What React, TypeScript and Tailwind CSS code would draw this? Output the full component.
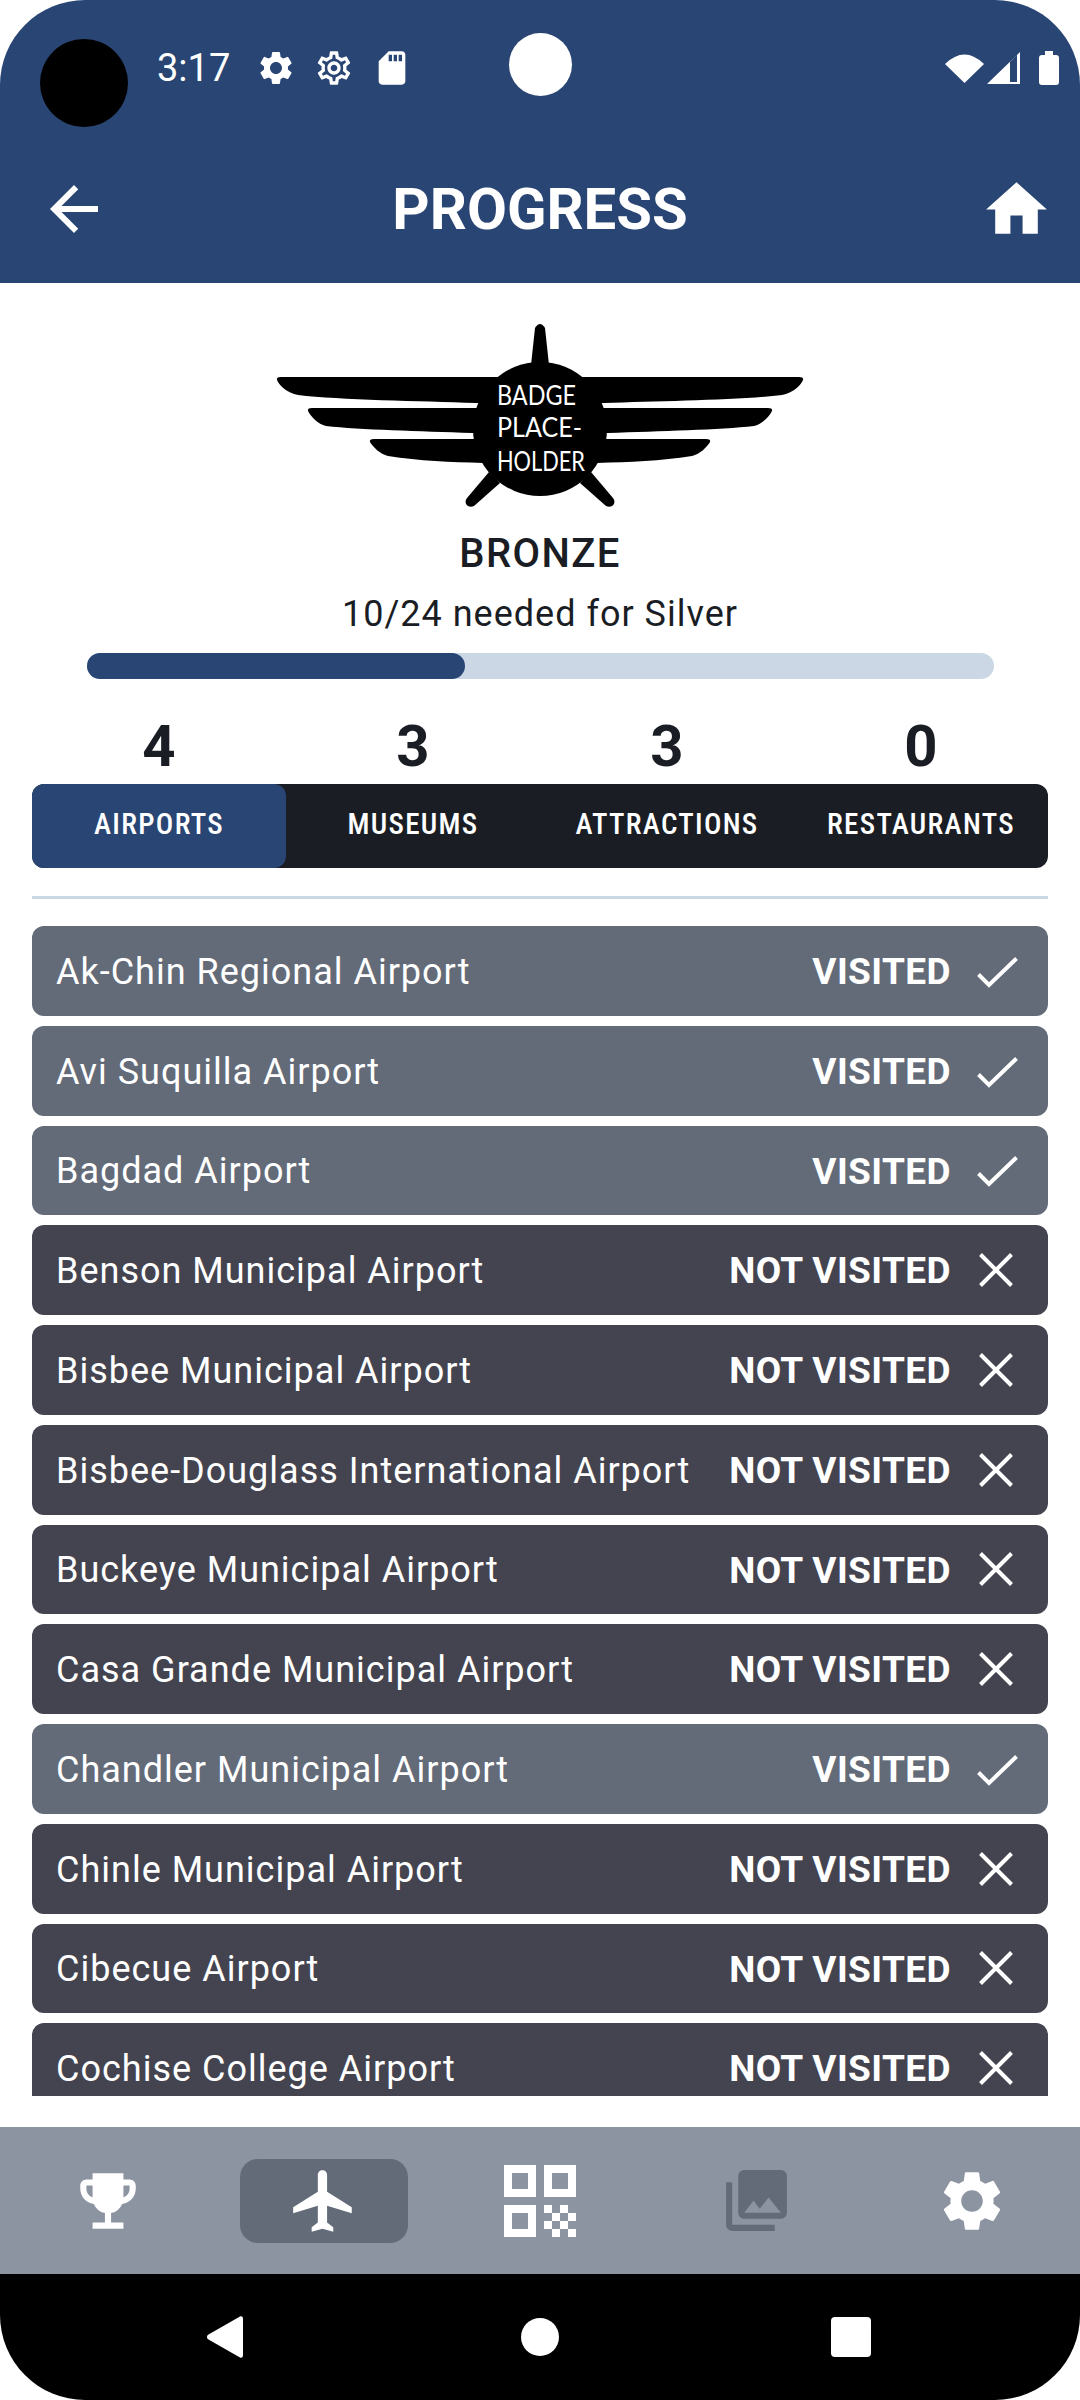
import { MdArrowBack, MdHome, MdSettings, MdOutlineSettings, MdPhotoLibrary, MdEmojiEvents, MdSdCard } from "react-icons/md";

const airports: [string, boolean][] = [
  ["Ak-Chin Regional Airport", true],
  ["Avi Suquilla Airport", true],
  ["Bagdad Airport", true],
  ["Benson Municipal Airport", false],
  ["Bisbee Municipal Airport", false],
  ["Bisbee-Douglass International Airport", false],
  ["Buckeye Municipal Airport", false],
  ["Casa Grande Municipal Airport", false],
  ["Chandler Municipal Airport", true],
  ["Chinle Municipal Airport", false],
  ["Cibecue Airport", false],
  ["Cochise College Airport", false],
];

const tabs = [
  { count: 4, label: "AIRPORTS" },
  { count: 3, label: "MUSEUMS" },
  { count: 3, label: "ATTRACTIONS" },
  { count: 0, label: "RESTAURANTS" },
];

function Badge() {
  const wings = (
    <>
      <path d="M281 377H500V403H476C420 401 340 400 298 395C287 393 279 385 277 380Q276 377 281 377Z" />
      <path d="M312 408H490V433H472C420 431 360 430 326 426C318 424 311 417 308 411Q307 408 312 408Z" />
      <path d="M374 439H500V463H483C450 462 420 461 388 456C380 454 373 447 370 442Q369 439 374 439Z" />
      <path d="M489 472L467 498C463 503 468 509 474 506L500 483Z" />
    </>
  );
  return (
    <svg width="540" height="192" viewBox="270 318 540 192" fill="#000">
      <path d="M531 365L535 328Q540 320 545 328L549 365Z" />
      <circle cx="540" cy="429" r="67" />
      {wings}
      <g transform="matrix(-1 0 0 1 1080 0)">{wings}</g>
      <g fill="#fff" fontFamily="Lato" fontSize="27" fontWeight="400">
        <text x="497" y="405" textLength="79" lengthAdjust="spacingAndGlyphs">BADGE</text>
        <text x="497" y="437" textLength="85" lengthAdjust="spacingAndGlyphs">PLACE-</text>
        <text x="497" y="471" textLength="88" lengthAdjust="spacingAndGlyphs">HOLDER</text>
      </g>
    </svg>
  );
}

function AirportRow({ name, visited }: { name: string; visited: boolean }) {
  return (
    <div className={`flex h-[89.75px] shrink-0 items-center justify-between rounded-xl pl-6 pr-[30px] text-white ${visited ? "bg-[#636b79]" : "bg-[#444450]"}`}>
      <span className="pt-[2px] text-[36px] tracking-[1px]">{name}</span>
      <div className="flex items-center gap-[25px]">
        <span className="pt-[2px] text-[37px] font-bold tracking-[0.4px]">{visited ? "VISITED" : "NOT VISITED"}</span>
        <svg width="42" height="42" viewBox="0 0 42 42" fill="none" stroke="#fff" strokeWidth="4">
          <path d={visited ? "M2.5 24.5L13 35L40.5 8.5" : "M4.5 5.5L35.5 36.5M35.5 5.5L4.5 36.5"} />
        </svg>
      </div>
    </div>
  );
}

function QrIcon() {
  const cells = [[0, 0], [16, 0], [8, 8], [24, 8], [0, 16], [16, 16], [8, 24], [24, 24]];
  return (
    <svg width="72" height="72" viewBox="0 0 72 72" fill="#fff">
      <path fillRule="evenodd" d="M0 0H32V32H0ZM8 8V24H24V8Z" />
      <path fillRule="evenodd" d="M40 0H72V32H40ZM48 8V24H64V8Z" />
      <path fillRule="evenodd" d="M0 40H32V72H0ZM8 48V64H24V48Z" />
      {cells.map(([x, y]) => (
        <rect key={`${x}-${y}`} x={40 + x} y={40 + y} width="8" height="8" />
      ))}
    </svg>
  );
}

export default function App() {
  return (
    <div className="relative flex h-[2400px] w-[1080px] flex-col overflow-hidden rounded-[85px] bg-white font-['Roboto',sans-serif] text-[#1a1d24]">
      {/* Status bar + header */}
      <header className="relative h-[283px] shrink-0 bg-[#294573] text-white">
        <div className="absolute left-[40px] top-[39px] h-[88px] w-[88px] rounded-full bg-black" />
        <div className="absolute left-[509px] top-[33px] h-[63px] w-[63px] rounded-full bg-white" />
        <div className="flex h-[136px] items-center justify-between pl-[157px] pr-[21px]">
          <div className="flex items-center gap-[26px]">
            <span className="text-[38px] leading-none">3:17</span>
            <div className="flex items-center gap-[18px]">
              <MdSettings size={40} />
              <MdOutlineSettings size={40} />
              <MdSdCard size={40} />
            </div>
          </div>
          <svg width="114" height="36" viewBox="0 0 114 36" fill="#fff">
            <path d="M0 14Q19.5 -5 39 14L19.5 33Z" />
            <path fillRule="evenodd" d="M42 34L75 2V34ZM65 12V32H72V5Z" />
            <path d="M100 1H108V5H111C113 5 114 6 114 8V32C114 34 113 35 111 35H97C95 35 94 34 94 32V8C94 6 95 5 97 5H100Z" />
          </svg>
        </div>
        <div className="relative flex h-[142px] items-center justify-between pl-[38px] pr-[27px] pt-[4px]">
          <MdArrowBack size={72} />
          <h1 className="absolute left-0 right-0 text-center text-[58px] font-bold">PROGRESS</h1>
          <MdHome size={73} />
        </div>
      </header>

      <main className="flex min-h-0 flex-1 flex-col px-8">
        <div className="flex flex-col items-center pt-[35px]">
          <Badge />
          <p className="mt-[20px] text-[40px] font-medium leading-[48px] tracking-[1.4px]">BRONZE</p>
          <p className="mt-[15px] text-[36px] leading-[42px] tracking-[1px]">10/24 needed for Silver</p>
          <div className="mt-[18px] h-[26px] w-[907px] rounded-full bg-[#cbd7e5]">
            <div className="h-full w-[378px] rounded-full bg-[#294573]" />
          </div>
        </div>

        <div className="mt-[35px] grid grid-cols-4">
          {tabs.map((t) => (
            <div key={t.label} className="text-center text-[58px] font-bold leading-[64px]">{t.count}</div>
          ))}
        </div>

        <div className="mt-[6px] grid h-[84px] grid-cols-4 rounded-xl bg-[#1a1d24] text-white">
          {tabs.map((t, i) => (
            <div key={t.label} className={`flex items-center justify-center rounded-xl pb-[2px] text-[29px] font-medium tracking-[1.3px] [font-stretch:80%] ${i === 0 ? "bg-[#294573]" : ""}`}>
              {t.label}
            </div>
          ))}
        </div>

        <div className="mt-7 h-[3px] bg-[#cbd7e5]" />

        <div className="mt-[27px] flex h-[1170px] flex-col gap-[10px] overflow-hidden">
          {airports.map(([name, visited]) => (
            <AirportRow key={name} name={name} visited={visited} />
          ))}
        </div>
      </main>

      {/* Bottom tabs */}
      <nav className="grid h-[147px] shrink-0 grid-cols-5 place-items-center bg-[#8c93a1] text-white">
        <MdEmojiEvents size={74} />
        <div className="flex h-[84px] w-[168px] items-center justify-center rounded-[18px] bg-[#636b79]">
          <svg width="74" height="74" viewBox="0 0 24 24" fill="#fff">
            <path d="M21 16v-2l-8-5V3.5c0-.83-.67-1.5-1.5-1.5S10 2.67 10 3.5V9l-8 5v2l8-2.5V19l-2 1.5V22l3.5-1 3.5 1v-1.5L13 19v-5.5l8 2.5z" />
          </svg>
        </div>
        <QrIcon />
        <MdPhotoLibrary size={73} className="text-[#636b79]" />
        <MdSettings size={72} />
      </nav>

      {/* Android nav bar */}
      <div className="flex h-[126px] shrink-0 items-center bg-black pl-[207px]">
        <svg width="36" height="42" viewBox="0 0 36 42" fill="#fff">
          <path d="M33 0.5C35 -0.5 36 1 36 3V39C36 41 35 42.5 33 41.5L1.5 23.5C-0.5 22.5 -0.5 19.5 1.5 18.5Z" />
        </svg>
        <div className="ml-[278px] h-[38px] w-[38px] rounded-full bg-white" />
        <div className="ml-[272px] h-[40px] w-[40px] rounded bg-white" />
      </div>
    </div>
  );
}
